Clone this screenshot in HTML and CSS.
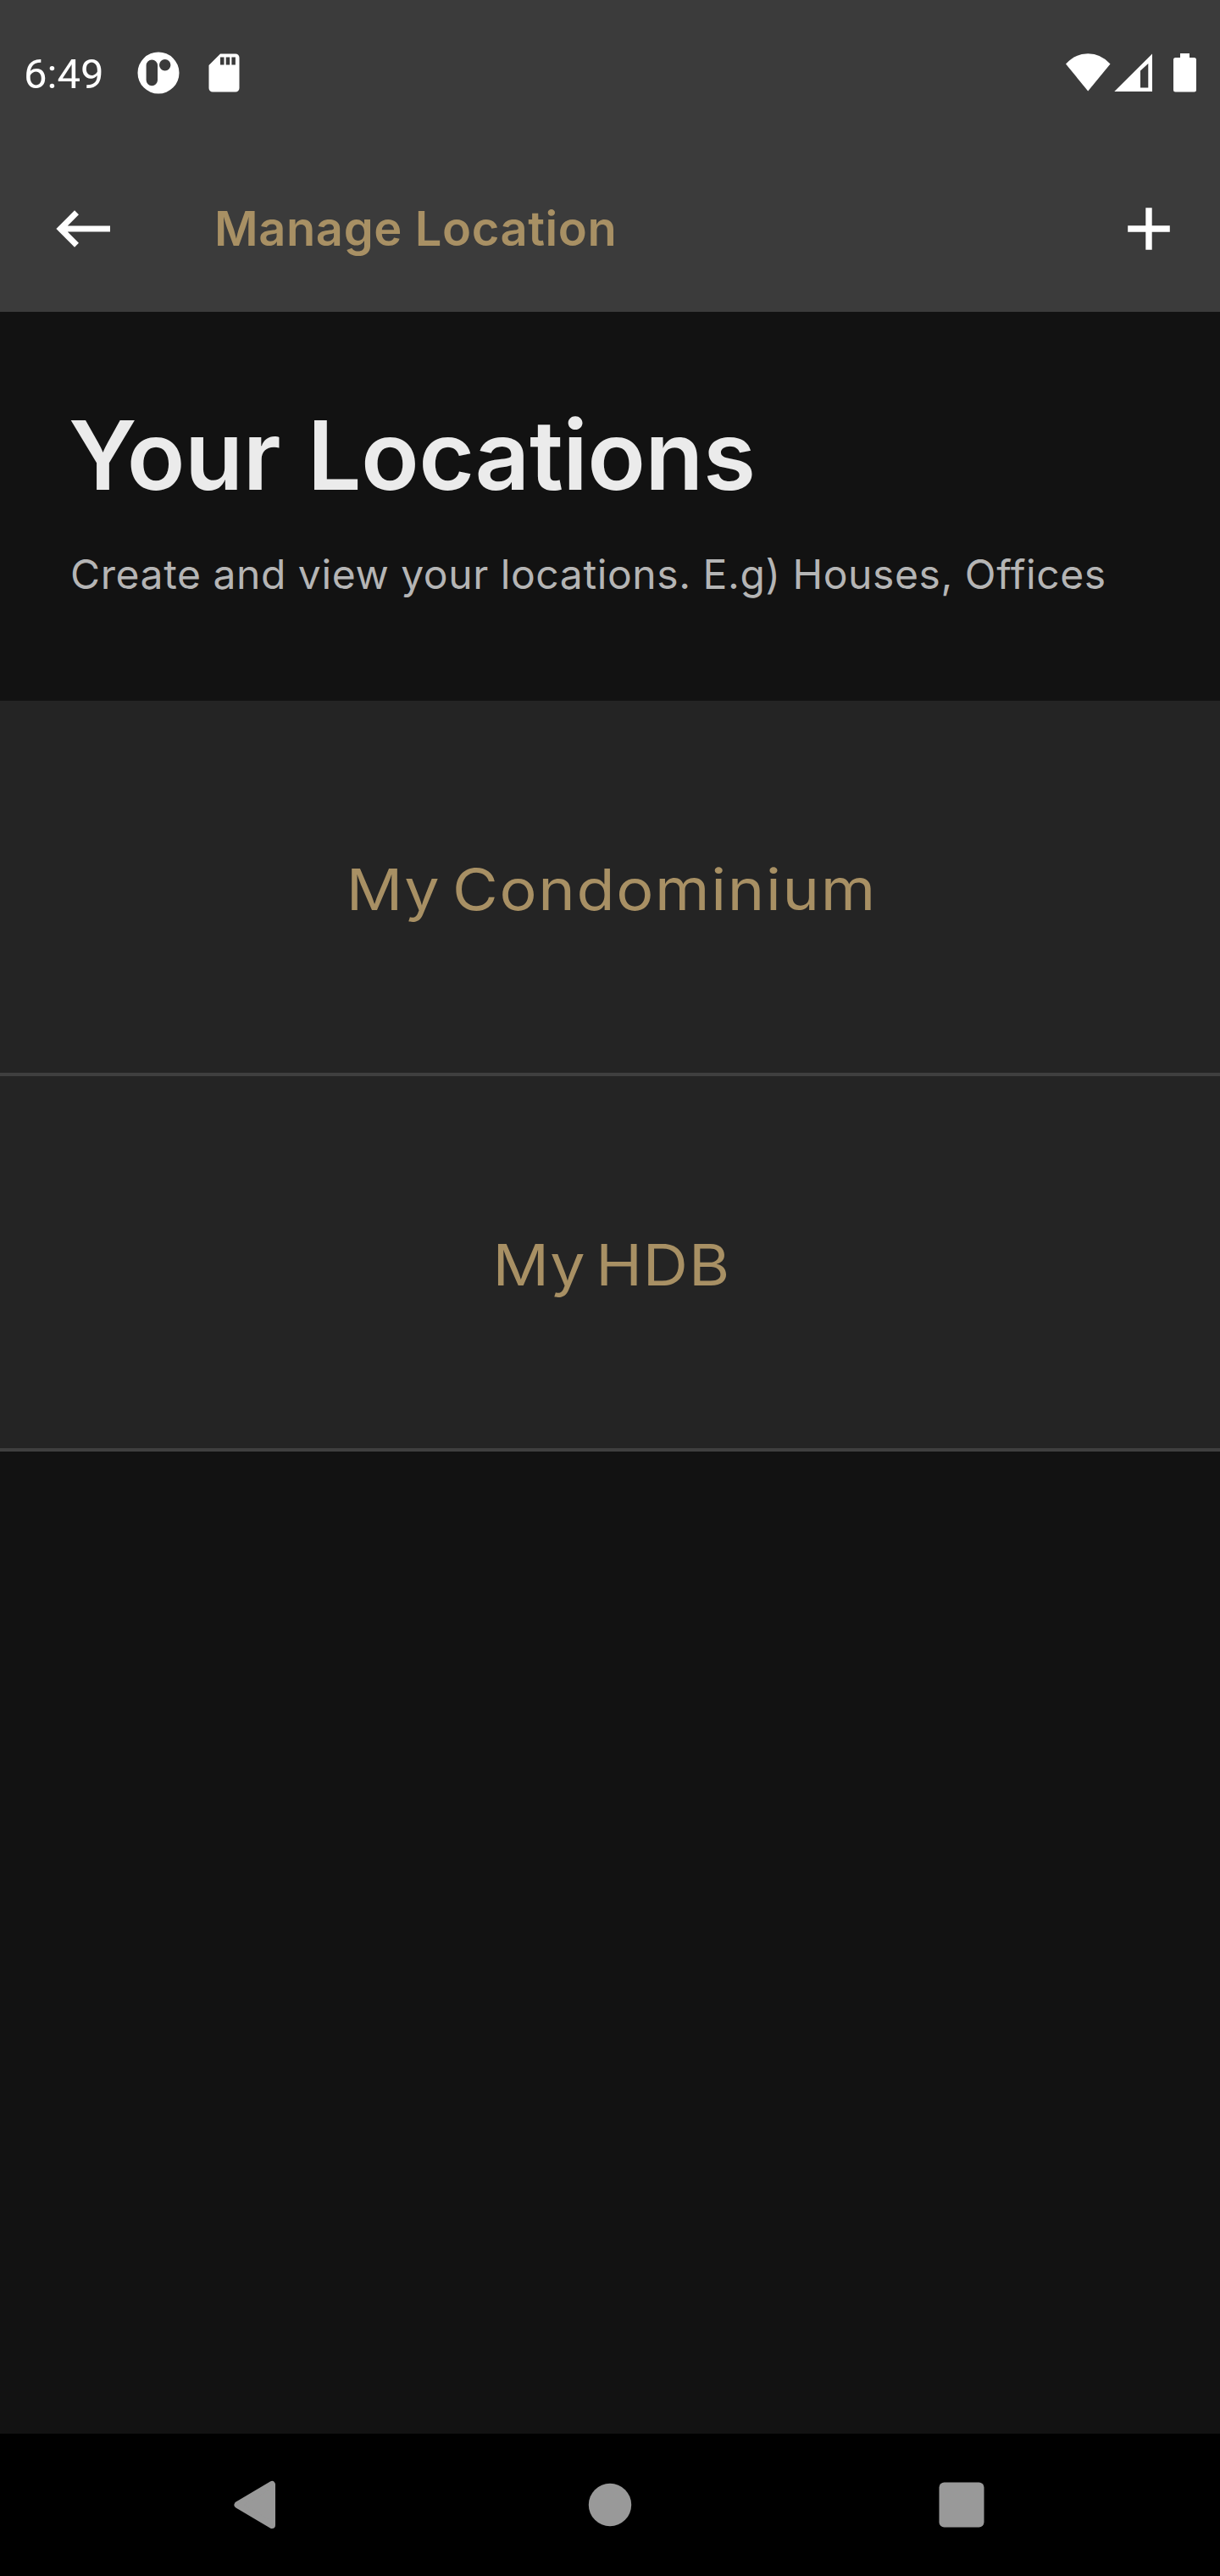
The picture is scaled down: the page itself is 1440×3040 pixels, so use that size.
FILE: index.html
```html
<!DOCTYPE html>
<html lang="en">
<head>
<meta charset="utf-8">
<title>Manage Location</title>
<link rel="stylesheet" href="styles.css">
</head>
<body>
<div class="screen">
  <header class="top">
    <div class="status">
      <div class="status-group">
        <span class="time">6:49</span>
        <svg class="status-app" width="50" height="50" viewBox="0 0 50 50"><path fill="#fff" fill-rule="evenodd" d="M25 .5a24.500 24.500 0 1 1 0 49a24.500 24.500 0 1 1 0-49zM17.300 9.500a6.700 6.700 0 0 0-6.700 6.700v17.300a6.700 6.700 0 0 0 13.400 0V16.200a6.700 6.700 0 0 0-6.700-6.700zM32.700 9.100a6.700 6.700 0 1 0 0 13.400a6.700 6.700 0 1 0 0-13.400z"/></svg>
        <svg class="status-card" width="37" height="46" viewBox="0 0 37 46"><path fill="#fff" fill-rule="evenodd" d="M14 .5h18a4.500 4.500 0 0 1 4.500 4.500v36a4.500 4.500 0 0 1-4.500 4.500H5a4.500 4.500 0 0 1-4.500-4.500V14zM14 4.500v9h4.500v-9zM20.700 4.500v9h4.500v-9zM27.400 4.500v9h4.500v-9z"/></svg>
      </div>
      <div class="status-group">
        <svg width="54" height="46" viewBox="0 0 54 46"><path fill="#fff" d="M1 12.500Q12 .3 27.200 .3T53.500 12.500L27.200 44.500z"/></svg>
        <svg class="signal" width="46" height="46" viewBox="0 0 46 46"><path fill="#fff" fill-rule="evenodd" d="M1.300 45L46 .5V45zM32 20.500V40.500h9.300V12z"/></svg>
        <svg class="battery" width="28" height="46" viewBox="0 0 28 46"><path fill="#fff" d="M9 0h11v5H25.500a2.500 2.500 0 0 1 2.500 2.500v35.500a2.500 2.500 0 0 1-2.500 2.500H3.500a2.500 2.500 0 0 1-2.500-2.500V7.500A2.500 2.500 0 0 1 3.500 5h5.500z"/></svg>
      </div>
    </div>
    <div class="appbar">
      <svg width="64" height="44" viewBox="0 0 64 44"><path fill="none" stroke="#fff" stroke-width="7" d="M64 22H6M24.500 2.800L5.300 22L24.500 41.200"/></svg>
      <h1 class="title">Manage Location</h1>
      <svg width="50" height="50" viewBox="0 0 50 50"><path fill="none" stroke="#fff" stroke-width="7.400" d="M25 .2V49.800M.2 25H49.800"/></svg>
    </div>
  </header>
  <main class="content">
    <section class="intro">
      <h2 class="heading">Your Locations</h2>
      <p class="sub">Create and view your locations. E.g) Houses, Offices</p>
    </section>
    <ul class="list">
      <li class="item"><span class="name name-condo">My Condominium</span></li>
      <li class="item"><span class="name name-hdb">My HDB</span></li>
    </ul>
  </main>
  <footer class="nav">
    <svg width="50" height="58" viewBox="0 0 50 58"><path fill="#999" stroke="#999" stroke-width="8" stroke-linejoin="round" d="M4.500 29L45 5V53z"/></svg>
    <svg class="nav-home" width="52" height="52" viewBox="0 0 52 52"><circle cx="26" cy="26" r="25.200" fill="#999"/></svg>
    <svg width="54" height="54" viewBox="0 0 54 54"><rect x=".5" y=".5" width="53" height="53" rx="6" fill="#999"/></svg>
  </footer>
</div>
</body>
</html>
```
FILE: styles.css
```css
* { box-sizing: border-box; margin: 0; padding: 0; }
body { background: #121212; font-family: Inter, "Liberation Sans", sans-serif; }
svg { display: block; flex: none; }

.screen { display: flex; flex-direction: column; width: 1440px; height: 3040px; }

.top { height: 368px; background: #3b3b3b; }
.status { display: flex; justify-content: space-between; align-items: center; height: 172px; padding: 0 28px; }
.status-group { display: flex; align-items: center; }
.time { width: 134px; padding-top: 4px; color: #fff; font: 49px/58px Roboto, sans-serif; }
.status-card { margin-left: 34px; }
.signal { margin-left: 3px; }
.battery { margin-left: 24px; }

.appbar { display: flex; align-items: center; height: 196px; padding: 0 59px 0 66px; }
.title { flex: 1; padding-left: 123px; color: #a89064; font-size: 56px; font-weight: 600; letter-spacing: .6px; white-space: nowrap; }

.content { flex: 1; }
.intro { height: 459px; padding: 100px 81px 0; white-space: nowrap; }
.heading { color: #ebebeb; font-size: 113px; line-height: 138px; font-weight: 600; letter-spacing: -.6px; word-spacing: 4px; }
.sub { margin: 41px 0 0 2px; color: #b5b5b5; font-size: 48px; line-height: 62px; letter-spacing: .6px; word-spacing: -.2px; }

.list { list-style: none; }
.item { display: flex; align-items: center; justify-content: center; height: 443px; padding-top: 6px; background: #242424; border-bottom: 4px solid #3f3f3f; color: #a89064; font-size: 67px; white-space: nowrap; }
.name { transform: scaleX(1.1); }
.name-condo { padding-left: 3px; letter-spacing: 1.500px; word-spacing: -8px; }
.name-hdb { padding-left: 3px; letter-spacing: .8px; word-spacing: -9px; }

.nav { display: flex; justify-content: space-between; align-items: center; height: 168px; padding: 0 278px 0 276px; background: #000; }
.nav-home { margin-left: 6px; }
```
